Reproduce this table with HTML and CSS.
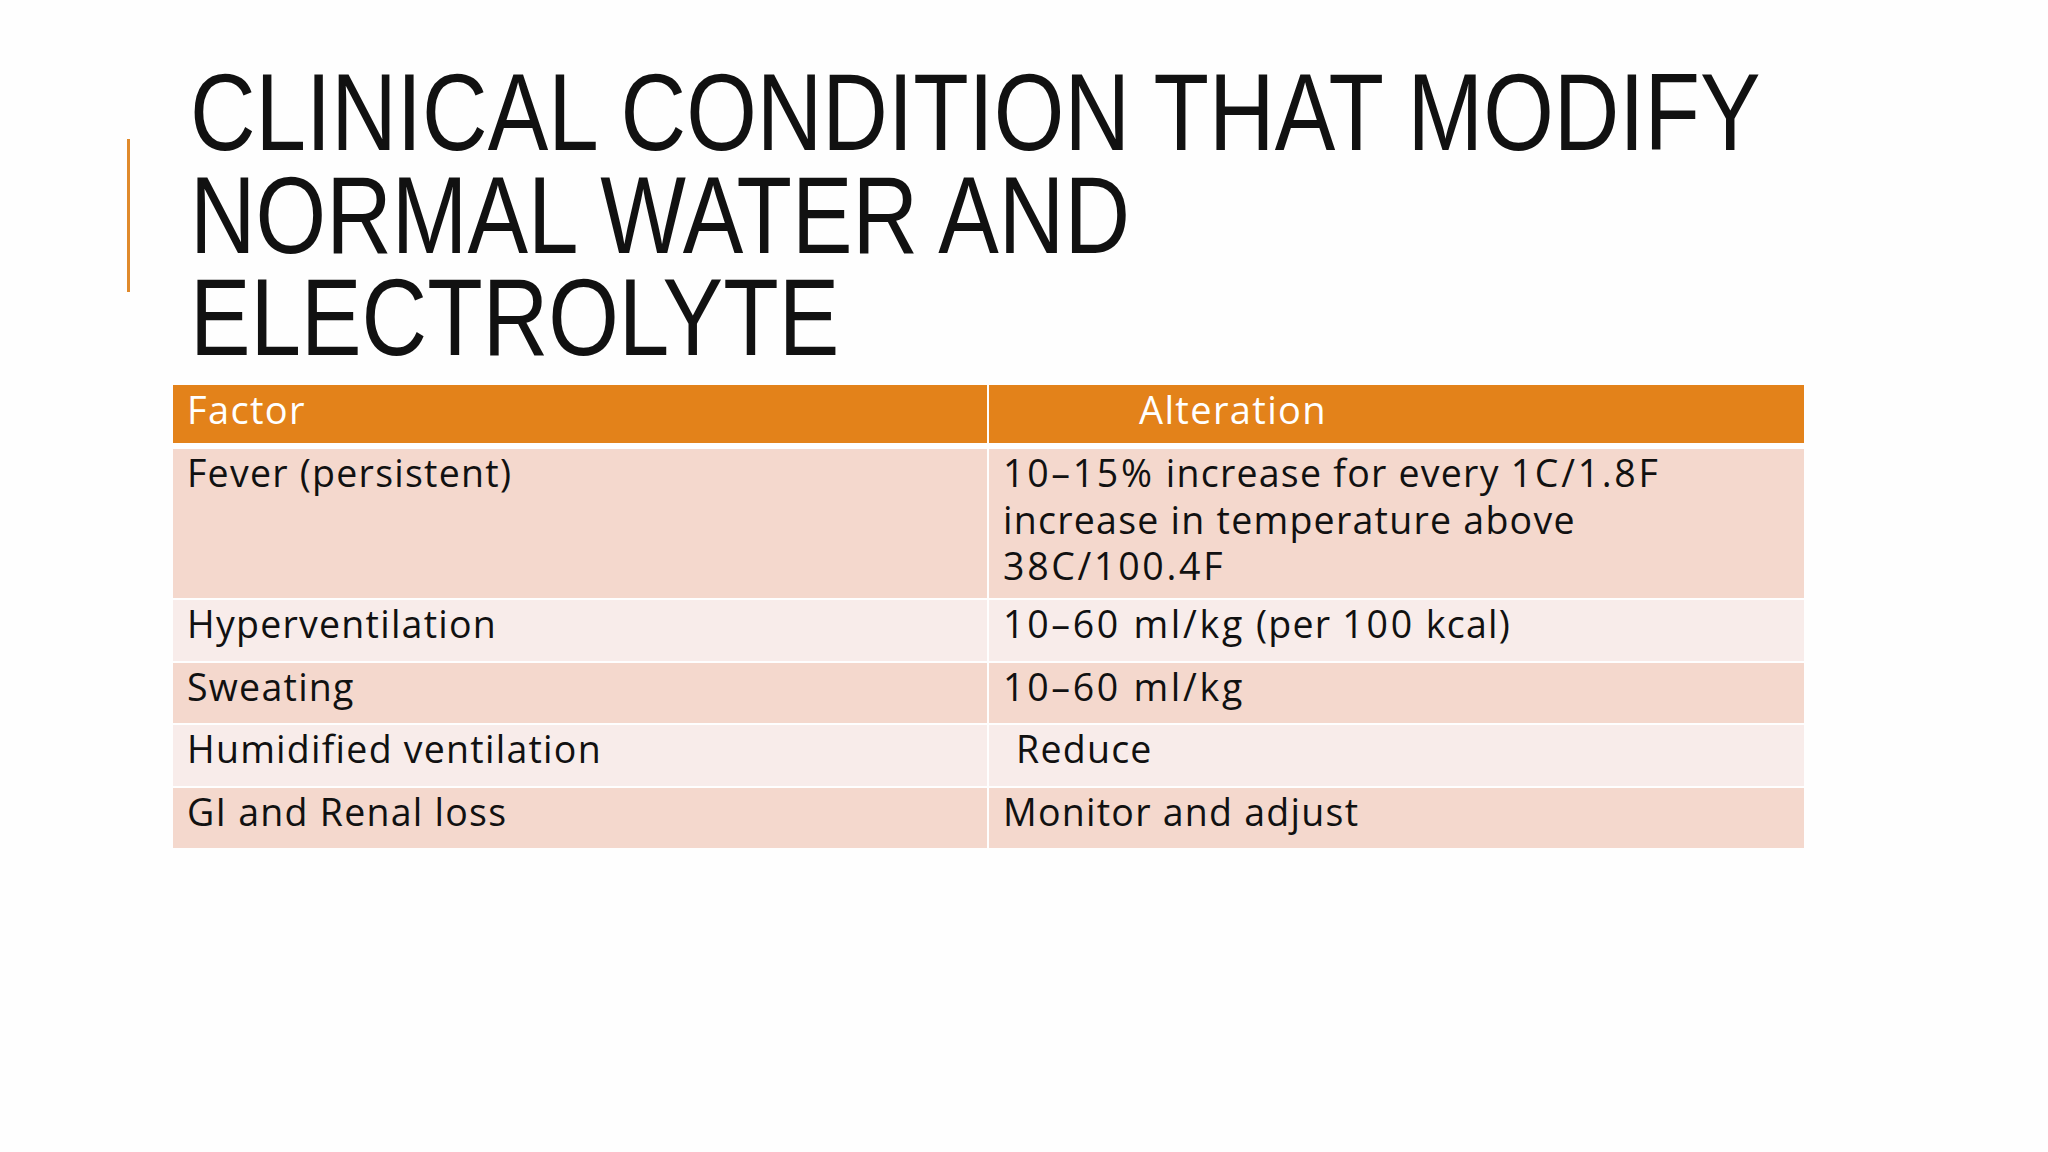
FILE: index.html
```html
<!DOCTYPE html>
<html lang="en">
<head>
<meta charset="utf-8">
<title>Clinical condition that modify normal water and electrolyte</title>
<link rel="stylesheet" href="styles.css">
</head>
<body>
<main class="slide">
  <header class="title-block">
    <div class="accent"></div>
    <h1 class="title">CLINICAL CONDITION THAT MODIFY<br>NORMAL WATER AND<br>ELECTROLYTE</h1>
  </header>
  <section class="table">
    <div class="row head">
      <div class="cell">Factor</div>
      <div class="cell head-alt">Alteration</div>
    </div>
    <div class="row odd tall">
      <div class="cell">Fever (persistent)</div>
      <div class="cell"><span class="num">10–15%</span> increase for every <span class="num">1C/1.8F</span><br>increase in temperature above<br><span class="num">38C/100.4F</span></div>
    </div>
    <div class="row even">
      <div class="cell">Hyperventilation</div>
      <div class="cell"><span class="num">10–60 ml/kg</span> (per <span class="num">100</span> kcal)</div>
    </div>
    <div class="row odd">
      <div class="cell">Sweating</div>
      <div class="cell"><span class="num">10–60 ml/kg</span></div>
    </div>
    <div class="row even">
      <div class="cell">Humidified ventilation</div>
      <div class="cell indent">Reduce</div>
    </div>
    <div class="row odd">
      <div class="cell">GI and Renal loss</div>
      <div class="cell">Monitor and adjust</div>
    </div>
  </section>
</main>
</body>
</html>
```
FILE: styles.css
```css
html, body {
  margin: 0;
  padding: 0;
  background: #ffffff;
}

.slide {
  width: 2048px;
  height: 1152px;
  background: #fefefe;
  overflow: hidden;
}

.title-block {
  display: flex;
  align-items: flex-start;
  padding-top: 61px;
  padding-left: 127px;
}

.accent {
  width: 3px;
  height: 153px;
  margin-top: 78px;
  background: #e08a2c;
  flex: none;
}

.title {
  margin: 0 0 0 60px;
  font-family: "Liberation Sans", Arial, sans-serif;
  font-weight: 400;
  font-size: 109px;
  line-height: 102.5px;
  color: #111111;
  white-space: nowrap;
  transform: scaleX(0.833);
  transform-origin: 0 0;
  flex: none;
}

.table {
  margin-top: 16.5px;
  margin-left: 173px;
  width: 1631px;
  display: flex;
  flex-direction: column;
  gap: 2px;
  font-family: "Open Sans", "Noto Sans", sans-serif;
  font-size: 37.5px;
  line-height: 46.5px;
  letter-spacing: 1.25px;
  color: #111111;
}

.row {
  display: grid;
  grid-template-columns: 814px 815px;
  column-gap: 2px;
  height: 60.5px;
}

.row.head {
  height: 58px;
  margin-bottom: 4px;
}

.row.tall {
  height: 149px;
}

.cell {
  padding: 1px 0 0 14px;
  box-sizing: border-box;
}

.num {
  letter-spacing: 2.7px;
}

.head .cell {
  background: #e3821a;
  color: #ffffff;
  font-size: 38px;
  letter-spacing: 1.35px;
  padding-top: 1px;
}

.head .head-alt {
  padding-left: 150px;
}

.odd .cell {
  background: #f4d8cd;
}

.even .cell {
  background: #f8ecea;
}

.cell.indent {
  padding-left: 27px;
}
```
